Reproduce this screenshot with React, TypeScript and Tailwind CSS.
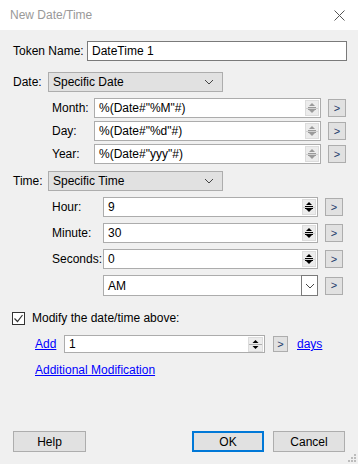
import React from "react";

const font = { fontFamily: '"Liberation Sans", Arial, sans-serif' };

function Spin({ dark }: { dark?: boolean }) {
  const c = dark ? "#000" : "#9a9a9a";
  return (
    <div className="flex flex-col w-[14px] h-[16px] bg-[#ececec] border border-[#dcdcdc] shrink-0">
      <svg width="12" height="14" viewBox="0 0 12 14">
        <polygon points="3,5 9,5 6,2" fill={c} />
        <rect x="2" y="6" width="8" height="1" fill={c} />
        <rect x="0" y="7" width="12" height="1" fill="#d0d0d0" />
        <rect x="2" y="8" width="8" height="1" fill={c} />
        <polygon points="3,9 9,9 6,12" fill={c} />
      </svg>
    </div>
  );
}

function Arrow({ small }: { small?: boolean }) {
  return (
    <div
      className={`flex items-center justify-center bg-[#e1e1e1] border border-[#adadad] shrink-0 ${
        small ? "w-[15px] h-[16px]" : "w-[18px] h-[18px]"
      }`}
    >
      <span className="text-[11px] leading-none text-[#1a3a6a]">&gt;</span>
    </div>
  );
}

function SpinInput({ value, width, dark }: { value: string; width: string; dark?: boolean }) {
  return (
    <div className={`flex items-center h-[20px] bg-white border border-[#acacac] pl-[4px] pr-[1px] ${width}`}>
      <span className="flex-1 text-[12px] text-black whitespace-nowrap">{value}</span>
      <Spin dark={dark} />
    </div>
  );
}

function Select({ value }: { value: string }) {
  return (
    <div className="flex items-center justify-between w-[175px] h-[20px] bg-[#e1e1e1] border border-[#adadad] pl-[4px] pr-[8px]">
      <span className="text-[12px] text-black">{value}</span>
      <svg width="10" height="6" viewBox="0 0 10 6">
        <polyline points="1,1 5,5 9,1" fill="none" stroke="#444" strokeWidth="1" />
      </svg>
    </div>
  );
}

export default function App() {
  return (
    <div className="w-[358px] h-[464px] flex flex-col bg-[#f0f0f0] text-[12px] text-black" style={font}>
      <div className="h-[30px] bg-white flex items-center justify-between pl-[10px] pr-[13px] shrink-0">
        <span className="text-[12px] text-[#999999]">New Date/Time</span>
        <svg width="11" height="11" viewBox="0 0 11 11">
          <line x1="0.5" y1="0.5" x2="10.5" y2="10.5" stroke="#555" strokeWidth="1" />
          <line x1="10.5" y1="0.5" x2="0.5" y2="10.5" stroke="#555" strokeWidth="1" />
        </svg>
      </div>

      <div className="flex-1 flex flex-col relative">
        {/* Token name */}
        <div className="flex items-center mt-[11px] pl-[13px]">
          <span className="w-[74px]">Token Name:</span>
          <div className="w-[260px] h-[20px] bg-white border border-[#7a7a7a] flex items-center pl-[4px]">
            DateTime 1
          </div>
        </div>

        {/* Date */}
        <div className="flex items-center mt-[11px] pl-[13px]">
          <span className="w-[35px]">Date:</span>
          <Select value="Specific Date" />
        </div>
        <div className="flex flex-col gap-[3px] mt-[6px] pl-[52px]">
          {[
            ["Month:", '%(Date#"%M"#)'],
            ["Day:", '%(Date#"%d"#)'],
            ["Year:", '%(Date#"yyy"#)'],
          ].map(([l, v]) => (
            <div key={l} className="flex items-center">
              <span className="w-[42px]">{l}</span>
              <SpinInput value={v} width="w-[227px]" />
              <div className="ml-[7px]">
                <Arrow />
              </div>
            </div>
          ))}
        </div>

        {/* Time */}
        <div className="flex items-center mt-[7px] pl-[13px]">
          <span className="w-[35px]">Time:</span>
          <Select value="Specific Time" />
        </div>
        <div className="flex flex-col gap-[6px] mt-[6px] pl-[52px]">
          {[
            ["Hour:", "9"],
            ["Minute:", "30"],
            ["Seconds:", "0"],
          ].map(([l, v]) => (
            <div key={l} className="flex items-center">
              <span className="w-[51px]">{l}</span>
              <SpinInput value={v} width="w-[215px]" dark />
              <div className="ml-[7px]">
                <Arrow />
              </div>
            </div>
          ))}
          <div className="flex items-center">
            <span className="w-[51px]"></span>
            <div className="flex items-center w-[215px] h-[21px] bg-white border border-[#acacac] pl-[4px]">
              <span className="flex-1">AM</span>
              <div className="w-[17px] h-[21px] border border-[#7a7a7a] -mr-px flex items-center justify-center">
                <svg width="10" height="6" viewBox="0 0 10 6">
                  <polyline points="1,1 5,5 9,1" fill="none" stroke="#444" strokeWidth="1" />
                </svg>
              </div>
            </div>
            <div className="ml-[7px]">
              <Arrow />
            </div>
          </div>
        </div>

        {/* Modify */}
        <div className="flex items-center mt-[13px] pl-[12px]">
          <div className="w-[13px] h-[13px] border border-[#333] bg-white flex items-center justify-center">
            <svg width="11" height="11" viewBox="0 0 11 11">
              <polyline points="1.5,5.5 4.5,8.5 9.5,2" fill="none" stroke="#333" strokeWidth="1.2" />
            </svg>
          </div>
          <span className="ml-[7px]">Modify the date/time above:</span>
        </div>
        <div className="flex items-center mt-[8px] pl-[35px]">
          <span className="w-[29px] text-[#0000ff] underline">Add</span>
          <div className="flex items-center w-[201px] h-[18px] bg-white border border-[#acacac] pl-[4px] pr-[1px]">
            <span className="flex-1">1</span>
            <div className="w-[15px] h-[15px] bg-[#ececec] border border-[#dcdcdc]">
              <svg width="13" height="13" viewBox="0 0 13 13">
                <polygon points="3.5,5 9.5,5 6.5,2" fill="#000" />
                <rect x="0" y="6" width="13" height="1" fill="#b0b0b0" />
                <polygon points="3.5,8 9.5,8 6.5,11" fill="#000" />
              </svg>
            </div>
          </div>
          <div className="ml-[8px]">
            <Arrow small />
          </div>
          <span className="ml-[9px] text-[#0000ff] underline">days</span>
        </div>
        <div className="mt-[8px] pl-[35px]">
          <span className="text-[#0000ff] underline">Additional Modification</span>
        </div>

        {/* Buttons */}
        <div className="mt-auto mb-[12px] flex items-center pl-[13px] pr-[13px]">
          <div className="w-[73px] h-[21px] bg-[#e1e1e1] border border-[#adadad] flex items-center justify-center">
            Help
          </div>
          <div className="flex-1" />
          <div className="w-[72px] h-[21px] bg-[#e1e1e1] border-2 border-[#0078d7] flex items-center justify-center">
            OK
          </div>
          <div className="ml-[9px] w-[72px] h-[21px] bg-[#e1e1e1] border border-[#adadad] flex items-center justify-center">
            Cancel
          </div>
        </div>
        <svg className="absolute right-[1px] bottom-[1px]" width="10" height="10" viewBox="0 0 10 10">
          {[
            [7, 1],
            [4, 4],
            [7, 4],
            [1, 7],
            [4, 7],
            [7, 7],
          ].map(([x, y]) => (
            <rect key={`${x}-${y}`} x={x} y={y} width="2" height="2" fill="#bcbcbc" />
          ))}
        </svg>
      </div>
    </div>
  );
}
